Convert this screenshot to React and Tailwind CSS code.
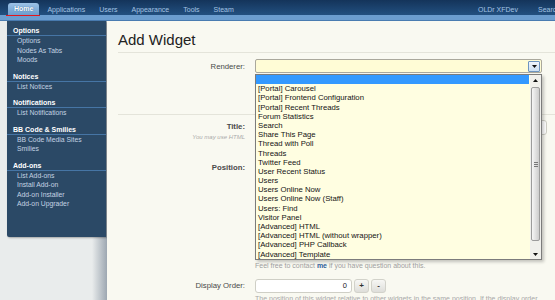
import React from 'react'

const NAV = ['Applications', 'Users', 'Appearance', 'Tools', 'Steam']

const GROUPS = [
  { title: 'Options', items: ['Options', 'Nodes As Tabs', 'Moods'] },
  { title: 'Notices', items: ['List Notices'] },
  { title: 'Notifications', items: ['List Notifications'] },
  { title: 'BB Code & Smilies', items: ['BB Code Media Sites', 'Smilies'] },
  { title: 'Add-ons', items: ['List Add-ons', 'Install Add-on', 'Add-on Installer', 'Add-on Upgrader'] },
]

const RENDERERS = [
  '',
  '[Portal] Carousel',
  '[Portal] Frontend Configuration',
  '[Portal] Recent Threads',
  'Forum Statistics',
  'Search',
  'Share This Page',
  'Thread with Poll',
  'Threads',
  'Twitter Feed',
  'User Recent Status',
  'Users',
  'Users Online Now',
  'Users Online Now (Staff)',
  'Users: Find',
  'Visitor Panel',
  '[Advanced] HTML',
  '[Advanced] HTML (without wrapper)',
  '[Advanced] PHP Callback',
  '[Advanced] Template',
]

function Tri({ up }) {
  // tiny arrow glyph used by the select button and the scrollbar
  return (
    <svg width="5" height="3" viewBox="0 0 5 3" className="block">
      <path d={up ? 'M0 3 L2.5 0 L5 3 Z' : 'M0 0 L5 0 L2.5 3 Z'} fill="#111" />
    </svg>
  )
}

function TopNav() {
  return (
    <>
      <div className="h-[15px] bg-gradient-to-b from-[#14345a] to-[#225080] flex items-end pl-[8px] text-[7px] leading-[12px]">
        <div className="relative h-[12px] px-[6px] rounded-t-[3px] bg-gradient-to-b from-[#9cc2e6] to-[#6b9dce] font-bold text-white [text-shadow:0_0_1px_#2a5a8a]">
          Home
          <span className="absolute -left-[2px] -right-[1px] bottom-[-1px] h-[1.5px] bg-[#e4151b]" />
        </div>
        <div className="flex h-[12px] pl-[1px] text-[#a3c3e3]">
          {NAV.map((n) => (
            <span key={n} className="px-[7px] pt-[1px]">
              {n}
            </span>
          ))}
        </div>
        <div className="ml-auto flex h-[12px] text-[#a3c3e3]">
          <span className="pt-[1px] pr-[20px]">OLDr XFDev</span>
          <span className="pt-[1px] w-[17px] overflow-hidden whitespace-nowrap">Search</span>
        </div>
      </div>
      <div className="h-[6px] bg-[#6b9dcf] border-b border-[#4a7cb1]" />
    </>
  )
}

function Sidebar() {
  return (
    <aside className="w-[107px] shrink-0 h-[279px] pl-[7px] bg-[linear-gradient(to_right,#e9ecec_86%,#9da7b1)]">
      <div className="w-[99px] h-[216px] pt-[4px] bg-[#2b4966] rounded-bl-[2px] shadow-[1px_1px_2px_rgba(0,0,0,0.3)]">
        {GROUPS.map((g) => (
          <div key={g.title} className="mb-[6px]">
            <div className="h-[11px] leading-[11px] pl-[6px] text-[7px] font-bold text-white border-b border-[#4675a5]">
              {g.title}
            </div>
            {g.items.map((it) => (
              <div key={it} className="h-[9.5px] leading-[9.5px] pl-[10px] text-[6.8px] text-[#c3d3e3]">
                {it}
              </div>
            ))}
          </div>
        ))}
      </div>
    </aside>
  )
}

function Label({ children, bold }) {
  return (
    <div
      className={
        'w-[127px] shrink-0 text-right text-[7.75px] leading-[12px] text-[#4a4a4a] ' + (bold ? 'font-bold' : '')
      }
    >
      {children}
    </div>
  )
}

function RendererList() {
  return (
    <div className="absolute left-[255px] top-[74px] w-[287px] h-[186px] flex border border-[#7c7c7c] bg-[#fffee1] shadow-[2px_2px_3px_rgba(0,0,0,0.22)]">
      <div className="flex-1 pr-[1px]">
        {RENDERERS.map((r, i) => (
          <div
            key={i}
            className={
              'h-[9.2px] leading-[9.2px] pl-[2px] text-[7.75px] whitespace-nowrap ' +
              (i === 0 ? 'bg-[#3399ff] text-white' : 'text-[#141414]')
            }
          >
            {r}
          </div>
        ))}
      </div>
      <div className="w-[11px] bg-[#f0f0ec] flex flex-col">
        <div className="h-[11px] flex items-center justify-center">
          <Tri up />
        </div>
        <div className="flex-1 pt-[1px] pb-[8px] px-[1px]">
          <div className="h-full rounded-[2px] border border-[#9c9c9c] bg-gradient-to-r from-[#f6f6f6] to-[#cdcdcd] flex flex-col items-center justify-center gap-[1px]">
            <span className="w-[4px] h-px bg-[#777]" />
            <span className="w-[4px] h-px bg-[#777]" />
            <span className="w-[4px] h-px bg-[#777]" />
          </div>
        </div>
        <div className="h-[10px] flex items-center justify-center">
          <Tri />
        </div>
      </div>
    </div>
  )
}

function Content() {
  return (
    <main className="flex-1 pl-[11px] pt-[10px] bg-[#f9f9f1]">
      <h1 className="text-[15px] leading-[18px] pb-[3px] text-[#222] border-b border-[#e4e4da]">Add Widget</h1>

      {/* Renderer */}
      <div className="h-[62px] pt-[6px] flex gap-[10px] border-b border-[#e4e4da]">
        <div className="pt-[2px]">
          <Label>Renderer:</Label>
        </div>
        <div className="w-[287px] h-[14px] rounded-[2px] border border-[#aaa89c] bg-[#fffcd6] flex items-center justify-end pr-[1px]">
          <div className="w-[12px] h-[11px] rounded-[1px] border border-[#6d94c0] bg-gradient-to-b from-[#f1f6fc] to-[#cddff1] flex items-center justify-center">
            <Tri />
          </div>
        </div>
      </div>

      {/* Title */}
      <div className="h-[47px] pt-[5px] flex gap-[10px]">
        <div className="pt-[1px]">
          <Label bold>Title:</Label>
          <div className="w-[127px] text-right text-[6px] leading-[8px] italic text-[#aaaaaa]">You may use HTML</div>
        </div>
        <div className="w-[292px] h-[15px] rounded-[3px] border border-[#cfcfc6] bg-white" />
      </div>

      {/* Position */}
      <div className="flex gap-[10px]">
        <Label bold>Position:</Label>
        <div>
          <div className="h-[99px]" />
          <p className="text-[7px] leading-[10px] text-[#a0a0a0] whitespace-nowrap">
            Feel free to contact <b className="text-[#2f5d9a]">me</b> if you have question about this.
          </p>
        </div>
      </div>

      {/* Display Order */}
      <div className="mt-[8px] flex gap-[10px]">
        <div className="pt-[1px]">
          <Label>Display Order:</Label>
        </div>
        <div>
          <div className="flex gap-[2px]">
            <div className="w-[97px] h-[14px] rounded-[3px] border border-[#cfcfc6] bg-white text-right pr-[4px] text-[7.5px] leading-[12px] text-[#222]">
              0
            </div>
            <div className="w-[15px] h-[14px] rounded-[3px] border border-[#d2d2ca] bg-gradient-to-b from-[#f7f7f4] to-[#dededa] text-center text-[8px] leading-[12px] font-bold text-[#333]">
              +
            </div>
            <div className="w-[15px] h-[14px] rounded-[3px] border border-[#d2d2ca] bg-gradient-to-b from-[#f7f7f4] to-[#dededa] text-center text-[8px] leading-[12px] font-bold text-[#333]">
              -
            </div>
          </div>
          <p className="mt-[1px] text-[7px] leading-[10px] text-[#a8a8a8] whitespace-nowrap">
            The position of this widget relative to other widgets in the same position. If the display order
          </p>
        </div>
      </div>
    </main>
  )
}

export default function App() {
  return (
    <div className="relative w-[555px] h-[300px] overflow-hidden bg-[#f9f9f1] font-['Liberation_Sans',Arial,sans-serif]">
      <TopNav />
      <div className="flex">
        <Sidebar />
        <Content />
      </div>
      <RendererList />
    </div>
  )
}
